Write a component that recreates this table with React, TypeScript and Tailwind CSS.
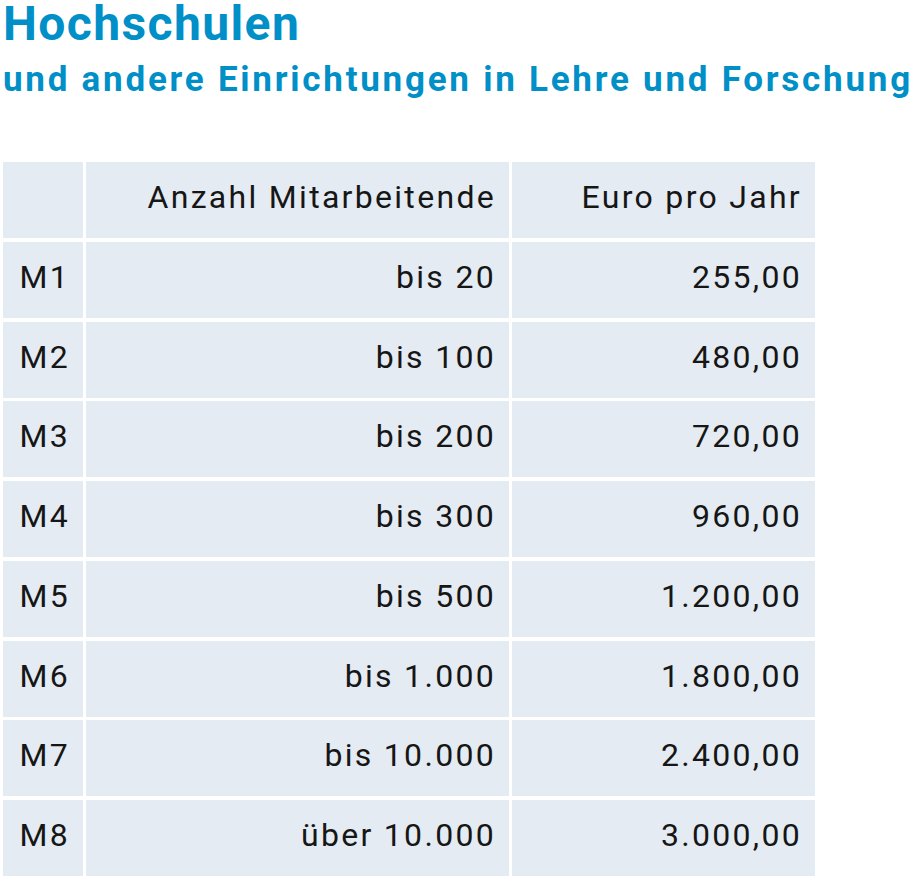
import React from "react";

const rows: [string, string, string][] = [
  ["M1", "bis 20", "255,00"],
  ["M2", "bis 100", "480,00"],
  ["M3", "bis 200", "720,00"],
  ["M4", "bis 300", "960,00"],
  ["M5", "bis 500", "1.200,00"],
  ["M6", "bis 1.000", "1.800,00"],
  ["M7", "bis 10.000", "2.400,00"],
  ["M8", "über 10.000", "3.000,00"],
];

function Cell({ children }: { children?: React.ReactNode }) {
  return (
    <div className="h-[76px] bg-[#e4ebf2] pt-[19px] pr-[13px] text-right text-[32px] leading-none tracking-[2.3px] text-[#161616]">
      {children}
    </div>
  );
}

export default function App() {
  return (
    <div className="w-[914px] h-[878px] bg-white font-['Roboto',sans-serif] overflow-hidden">
      <h1 className="pl-[3px] text-[48px] font-bold leading-none tracking-[1.4px] text-[#008fc7]">
        Hochschulen
      </h1>
      <h2 className="mt-[14px] pl-[3px] text-[35px] font-bold leading-none tracking-[2.75px] text-[#008fc7] whitespace-nowrap">
        und andere Einrichtungen in Lehre und Forschung
      </h2>
      <div className="mt-[65px] ml-[3px] grid grid-cols-[80px_423px_303px] gap-x-[3px] gap-y-[3.75px]">
        <Cell />
        <Cell>Anzahl Mitarbeitende</Cell>
        <Cell>Euro pro Jahr</Cell>
        {rows.map((r) => (
          <React.Fragment key={r[0]}>
            <Cell>{r[0]}</Cell>
            <Cell>{r[1]}</Cell>
            <Cell>{r[2]}</Cell>
          </React.Fragment>
        ))}
      </div>
    </div>
  );
}
